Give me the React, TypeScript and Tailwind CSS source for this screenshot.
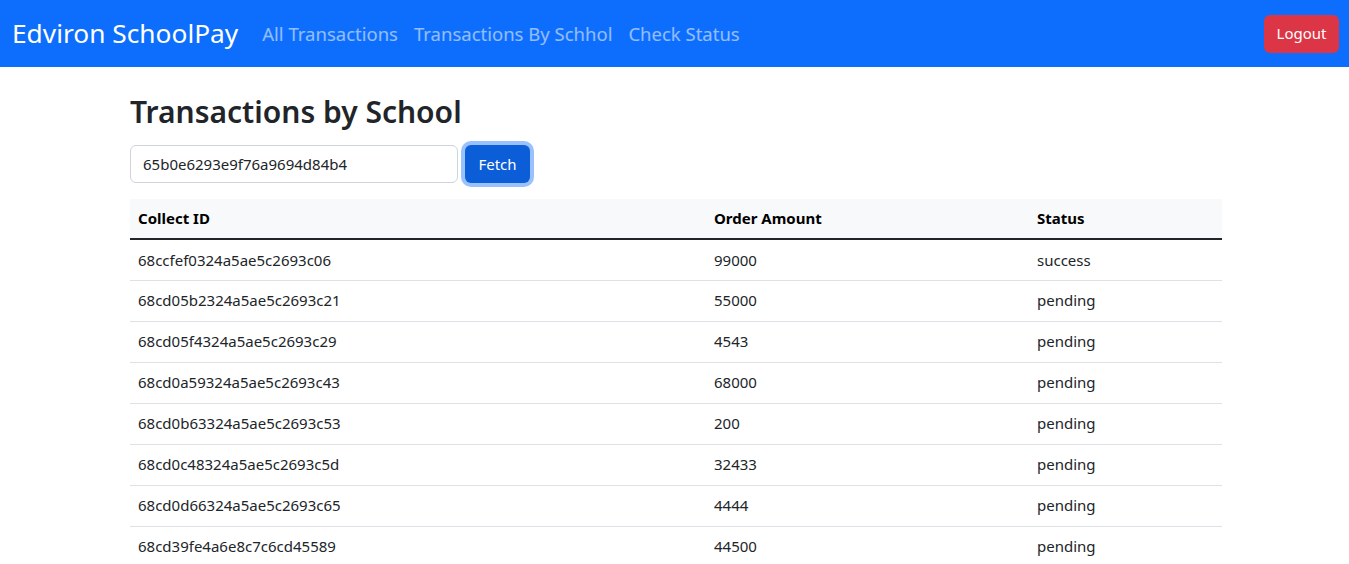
import { useState } from "react";

const rows = [
	{ id: "68ccfef0324a5ae5c2693c06", amount: "99000", status: "success" },
	{ id: "68cd05b2324a5ae5c2693c21", amount: "55000", status: "pending" },
	{ id: "68cd05f4324a5ae5c2693c29", amount: "4543", status: "pending" },
	{ id: "68cd0a59324a5ae5c2693c43", amount: "68000", status: "pending" },
	{ id: "68cd0b63324a5ae5c2693c53", amount: "200", status: "pending" },
	{ id: "68cd0c48324a5ae5c2693c5d", amount: "32433", status: "pending" },
	{ id: "68cd0d66324a5ae5c2693c65", amount: "4444", status: "pending" },
	{ id: "68cd39fe4a6e8c7c6cd45589", amount: "44500", status: "pending" },
];

export default function App() {
	const [schoolId, setSchoolId] = useState("65b0e6293e9f76a9694d84b4");

	return (
		<div className="min-h-screen bg-white text-[#212529] font-['Segoe_UI','Noto_Sans',sans-serif] text-[15px]">
			<nav className="h-[67px] bg-[#0d6efd] flex items-center justify-between pl-3 pr-[10px]">
				<div className="flex items-center">
					<a href="#" className="text-white text-[26.3px] leading-none mr-4">Edviron SchoolPay</a>
					<div className="flex items-center text-[18.5px] text-white/55">
						<a href="#" className="px-2">All Transactions</a>
						<a href="#" className="px-2">Transactions By Schhol</a>
						<a href="#" className="px-2">Check Status</a>
					</div>
				</div>
				<button className="bg-[#dc3545] text-white rounded-md w-[75px] h-[38px] leading-none">Logout</button>
			</nav>

			<main className="w-[1092px] ml-[130px] pt-[27px]">
				<h2 className="text-[30px] font-semibold leading-[1.2] mb-[15px]">Transactions by School</h2>
				<div className="flex items-center gap-[7px] mb-4">
					<input
						value={schoolId}
						onChange={(e) => setSchoolId(e.target.value)}
						className="w-[328px] h-[38px] border border-[#ced4da] rounded-md px-3 outline-none"
					/>
					<button className="bg-[#0b5ed7] text-white rounded-md h-[38px] w-[65px] shadow-[0_0_0_4px_rgba(49,132,253,0.5)]">
						Fetch
					</button>
				</div>

				<table className="w-full border-collapse">
					<thead>
						<tr className="bg-[#f8f9fa] h-[40px] text-black font-bold">
							<th className="text-left px-2 w-[576px]">Collect ID</th>
							<th className="text-left px-2 w-[323px]">Order Amount</th>
							<th className="text-left px-2">Status</th>
						</tr>
					</thead>
					<tbody className="border-t-2 border-[#212529]">
						{rows.map((r) => (
							<tr key={r.id} className="h-[41px] border-b border-[#dee2e6]">
								<td className="px-2">{r.id}</td>
								<td className="px-2">{r.amount}</td>
								<td className="px-2">{r.status}</td>
							</tr>
						))}
					</tbody>
				</table>
			</main>
		</div>
	);
}
